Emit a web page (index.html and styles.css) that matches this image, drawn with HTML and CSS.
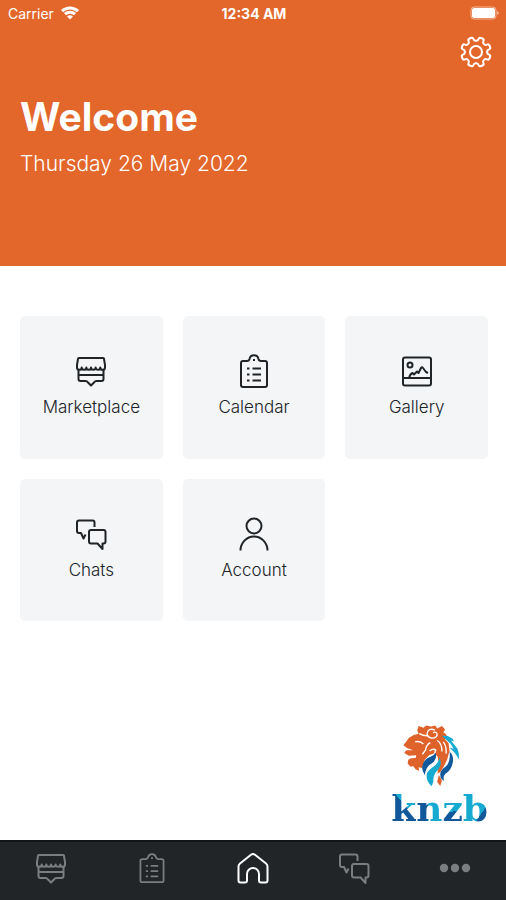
FILE: index.html
```html
<!DOCTYPE html>
<html lang="en">
<head>
    <meta charset="UTF-8">
    <meta name="viewport" content="width=device-width, initial-scale=1.0">
    <title>KNZB</title>
    <link rel="stylesheet" href="styles.css">
</head>
<body>
    <!-- Icons shared by the tiles and the tab bar -->
    <svg class="sprite" aria-hidden="true">
        <symbol id="icon-market" viewBox="0 0 36 36">
            <path d="M6 5h24q1 0 1 1l1 6v2.500a2.300 2.300 0 0 1-4.700 0 2.300 2.300 0 0 1-4.650 0 2.300 2.300 0 0 1-4.650 0 2.300 2.300 0 0 1-4.650 0 2.300 2.300 0 0 1-4.650 0 2.300 2.300 0 0 1-4.700 0V12L5 6q0-1 1-1z"/>
            <path d="M5.500 17v9q0 2 2 2h5q1.500 0 2.500 1.500l3 3 3-3q1-1.500 2.500-1.500h5q2 0 2-2v-9M5.500 22h25"/>
        </symbol>
        <symbol id="icon-calendar" viewBox="0 0 36 36">
            <path d="M7 8h4q2 0 2.500-2a4.600 4.600 0 0 1 9 0q.5 2 2.500 2h4q2 0 2 2v22q0 2-2 2H7q-2 0-2-2V10q0-2 2-2z"/>
            <path d="M17 7h2M11 15.500h2.500M16.500 15.500H25M11 21.500h2.500M16.500 21.500H25M11 27.500h2.500M16.500 27.500H25"/>
        </symbol>
        <symbol id="icon-gallery" viewBox="0 0 36 36">
            <rect x="4" y="4.500" width="28" height="28" rx="2"/>
            <circle cx="11" cy="12" r="2.500"/>
            <path d="M4 25h28M10 25q1-4 3.500-5l1.500 1.500L18 18.500l1.500 1.500 2.500-5q1-1.500 2 0l3 4 2 1"/>
        </symbol>
        <symbol id="icon-chats" viewBox="0 0 36 36">
            <path d="M21.500 11V6.500q0-2-2-2H6q-2 0-2 2V15q0 2 2 2h2l2.500 5.500 2-4"/>
            <path d="M18 14h12.500q2 0 2 2v9.500q0 2-2 2h-1V33l-5-5.500H18q-2 0-2-2V16q0-2 2-2z"/>
        </symbol>
        <symbol id="icon-account" viewBox="0 0 36 36">
            <circle cx="18" cy="10" r="7.500"/>
            <path d="M4.500 34.500a13.500 14 0 0 1 27 0"/>
        </symbol>
        <symbol id="icon-home" viewBox="0 0 36 36">
            <path d="M18 4q1 0 2 .8L31 13.500q1.500 1.200 1.500 3v14q0 2-2 2H26q-2 0-2-2V24a6 6 0 0 0-12 0v6.500q0 2-2 2H5.500q-2 0-2-2v-14q0-1.800 1.500-3L16 4.800q1-.8 2-.8z"/>
        </symbol>
        <symbol id="icon-more" viewBox="0 0 36 36">
            <circle cx="7" cy="18" r="4.200"/>
            <circle cx="18" cy="18" r="4.200"/>
            <circle cx="29" cy="18" r="4.200"/>
        </symbol>
    </svg>

    <header class="header">
        <div class="status-bar">
            <div class="carrier">
                <span>Carrier</span>
                <svg class="wifi" viewBox="0 0 20 14" aria-hidden="true">
                    <path d="M2 5.200a11.500 11.500 0 0 1 16 0M5 8.200a7.300 7.300 0 0 1 10 0"/>
                    <path class="wifi-dot" d="M7 10.500q3-2.400 6 0l-3 3z"/>
                </svg>
            </div>
            <time class="clock">12:34 AM</time>
            <svg class="battery" viewBox="0 0 30 14" aria-hidden="true">
                <rect class="battery-case" x="1" y="1" width="25" height="12" rx="3"/>
                <rect x="2" y="2" width="23" height="10" rx="2"/>
                <path d="M27.500 5q2 2 0 4z"/>
            </svg>
        </div>
        <button class="settings" type="button" aria-label="Settings">
            <svg viewBox="-16 -16 32 32" aria-hidden="true">
                <path d="M11.200 0Q11 2 13 2.600 14.800 3.200 14.200 4.600L13.300 6.800Q12.600 8.200 11 7.400 9.200 6.600 7.900 7.900 6.600 9.200 7.400 11 8.200 12.600 6.800 13.300L4.600 14.200Q3.200 14.800 2.600 13 2 11 0 11.200-2 11-2.600 13-3.200 14.800-4.600 14.200L-6.800 13.300Q-8.200 12.600-7.400 11-6.600 9.200-7.900 7.900-9.200 6.600-11 7.400-12.600 8.200-13.300 6.800L-14.200 4.600Q-14.800 3.200-13 2.600-11 2-11.200 0-11-2-13-2.600-14.800-3.200-14.200-4.600L-13.300-6.800Q-12.600-8.200-11-7.400-9.200-6.600-7.900-7.900-6.600-9.200-7.400-11-8.200-12.600-6.800-13.300L-4.600-14.200Q-3.200-14.800-2.600-13-2-11 0-11.200 2-11 2.600-13 3.200-14.800 4.600-14.200L6.800-13.300Q8.200-12.600 7.400-11 6.600-9.200 7.900-7.900 9.200-6.600 11-7.400 12.600-8.200 13.300-6.800L14.200-4.600Q14.800-3.200 13-2.600 11-2 11.200 0z"/>
                <circle r="6"/>
            </svg>
        </button>
        <div class="greeting">
            <h1>Welcome</h1>
            <p>Thursday 26 May 2022</p>
        </div>
    </header>

    <main class="content">
        <div class="tiles">
            <a class="tile" href="#marketplace"><svg class="icon"><use href="#icon-market"/></svg><span>Marketplace</span></a>
            <a class="tile" href="#calendar"><svg class="icon"><use href="#icon-calendar"/></svg><span>Calendar</span></a>
            <a class="tile" href="#gallery"><svg class="icon"><use href="#icon-gallery"/></svg><span>Gallery</span></a>
            <a class="tile" href="#chats"><svg class="icon"><use href="#icon-chats"/></svg><span>Chats</span></a>
            <a class="tile" href="#account"><svg class="icon"><use href="#icon-account"/></svg><span>Account</span></a>
        </div>

        <div class="logo">
            <svg class="lion" viewBox="18 14 174 192" aria-hidden="true">
                <path class="orange" d="M66 20L80 25 88 18 102 21 115 18 120 27 134 20 143 30 138 38 148 46 143 58 153 70 156 92 149 118 138 140 129 154 121 158 125 128 121 108 111 100 97 104 84 118 76 142 66 140 68 150 58 146 50 136 42 138 34 128 36 118 42 114 58 112 59 105 38 106 24 98 30 90 50 90 32 84 22 76 29 66 38 54 52 46 66 42 62 32z"/>
                <path class="cut" d="M68 42q12 7 27 6M56 66q14-4 24 6M114 32q-20-8-23 9-1 12 14 14 15 0 15-11-2-9-12-5M120 62q14 8 14 32M100 68q-12 6-14 22l-9 12M98 92q12-8 18-2l-4 10M138 66q10 14 8 34"/>
                <path class="orange" d="M125 162l9 16-5 16-9-12z"/>
                <path class="navy" d="M116 98q4 20-12 31-17 9-20 33-12-16-5-33 6-15 22-20 9-4 15-11zM156 94q14 12 9 34-4 20-20 30-10 9-4 22-13-6-12-21 2-13 15-21 16-11 12-44z"/>
                <path class="cyan" d="M127 112q9 19-4 35-16 14-14 34l-5 14q-20-19-13-40 6-10 18-17 14-9 18-26zM134 48l17 1 14 8 4 8-9-3 19 24q6 16 4 30-10-20-27-34l12 4q-6-15-20-25z"/>
            </svg>
            <div class="wordmark"><span class="k">k</span><span class="n">n</span><span class="z">z</span><span class="b">b</span></div>
        </div>
    </main>

    <nav class="tab-bar" aria-label="Main">
        <a href="#marketplace" aria-label="Marketplace"><svg class="icon"><use href="#icon-market"/></svg></a>
        <a href="#calendar" aria-label="Calendar"><svg class="icon icon-small"><use href="#icon-calendar"/></svg></a>
        <a class="active" href="#home" aria-label="Home"><svg class="icon"><use href="#icon-home"/></svg></a>
        <a href="#chats" aria-label="Chats"><svg class="icon"><use href="#icon-chats"/></svg></a>
        <a class="more" href="#more" aria-label="More"><svg class="icon"><use href="#icon-more"/></svg></a>
    </nav>
</body>
</html>
```
FILE: styles.css
```css
* {
    box-sizing: border-box;
}
body {
    margin: 0;
    min-height: 100vh;
    display: flex;
    flex-direction: column;
    font-family: Inter, "Liberation Sans", sans-serif;
    background: #fff;
    color: #202427;
}
a {
    color: inherit;
    text-decoration: none;
}
svg {
    display: block;
}
.sprite {
    display: none;
}
.icon {
    width: 36px;
    height: 36px;
    fill: none;
    stroke: currentColor;
    stroke-width: 2;
    stroke-linejoin: round;
}
.icon-small {
    width: 32px;
    height: 32px;
}

/* Header */
.header {
    display: flex;
    flex-direction: column;
    padding-bottom: 88px;
    background: #e3662b;
    color: #fff;
}
.status-bar {
    display: grid;
    grid-template-columns: 1fr auto 1fr;
    align-items: center;
    height: 26px;
    padding: 0 6px 0 8px;
    font-size: 14px;
}
.carrier {
    display: flex;
    align-items: center;
    gap: 6px;
}
.clock {
    font-weight: 700;
}
.wifi {
    width: 20px;
    height: 14px;
    fill: none;
    stroke: #fff;
    stroke-width: 3;
}
.wifi-dot {
    fill: #fff;
    stroke: none;
}
.battery {
    justify-self: end;
    width: 30px;
    height: 14px;
    fill: #fff;
}
.battery-case {
    fill: none;
    stroke: #f3b799;
}
.settings {
    align-self: flex-end;
    margin: 10px 14px 0 0;
    padding: 0;
    border: none;
    background: none;
    cursor: pointer;
}
.settings svg {
    width: 32px;
    height: 32px;
    fill: none;
    stroke: #fff;
    stroke-width: 2;
}
.greeting {
    padding: 24px 20px 0;
}
.greeting h1 {
    margin: 0;
    font-size: 39px;
    line-height: 50px;
}
.greeting p {
    margin: 8px 0 0;
    font-size: 21px;
    font-weight: 300;
    line-height: 28px;
}

/* Tiles */
.content {
    flex: 1;
    display: flex;
    flex-direction: column;
    justify-content: space-between;
    padding: 50px 18px 14px 20px;
}
.tiles {
    display: grid;
    grid-template-columns: repeat(3, 1fr);
    gap: 20px;
}
.tile {
    display: flex;
    flex-direction: column;
    align-items: center;
    justify-content: center;
    gap: 4px;
    aspect-ratio: 1;
    border-radius: 5px;
    background: #f3f5f7;
    font-size: 17px;
    font-weight: 300;
    line-height: 28px;
}

/* Logo */
.logo {
    align-self: flex-end;
    display: flex;
    flex-direction: column;
    align-items: center;
}
.lion {
    width: 60px;
    height: 66px;
    margin-right: 16px;
}
.orange {
    fill: #df622a;
}
.navy {
    fill: #12599b;
}
.cyan {
    fill: #16aad1;
}
.cut {
    fill: none;
    stroke: #fff;
    stroke-width: 4;
}
.wordmark {
    font-family: "DejaVu Serif", serif;
    font-size: 36px;
    font-weight: bold;
    line-height: 36px;
}
.wordmark span {
    background-clip: text;
    -webkit-background-clip: text;
    color: transparent;
}
.k {
    background-image: linear-gradient(50deg, #12599b 56%, #16aad1 56%);
}
.n {
    background-image: linear-gradient(90deg, #12599b 48%, #16aad1 48%);
}
.z {
    background-image: linear-gradient(170deg, #16aad1 58%, #12599b 58%);
}
.b {
    background-image: linear-gradient(125deg, #16aad1 68%, #12599b 68%);
}

/* Tab bar */
.tab-bar {
    display: grid;
    grid-template-columns: repeat(5, 1fr);
    height: 60px;
    padding-bottom: 6px;
    border-top: 2px solid #101416;
    background: #212528;
    color: #7b7e80;
}
.tab-bar a {
    display: flex;
    align-items: center;
    justify-content: center;
}
.tab-bar .active {
    color: #fff;
}
.more .icon {
    fill: currentColor;
    stroke: none;
}
```
